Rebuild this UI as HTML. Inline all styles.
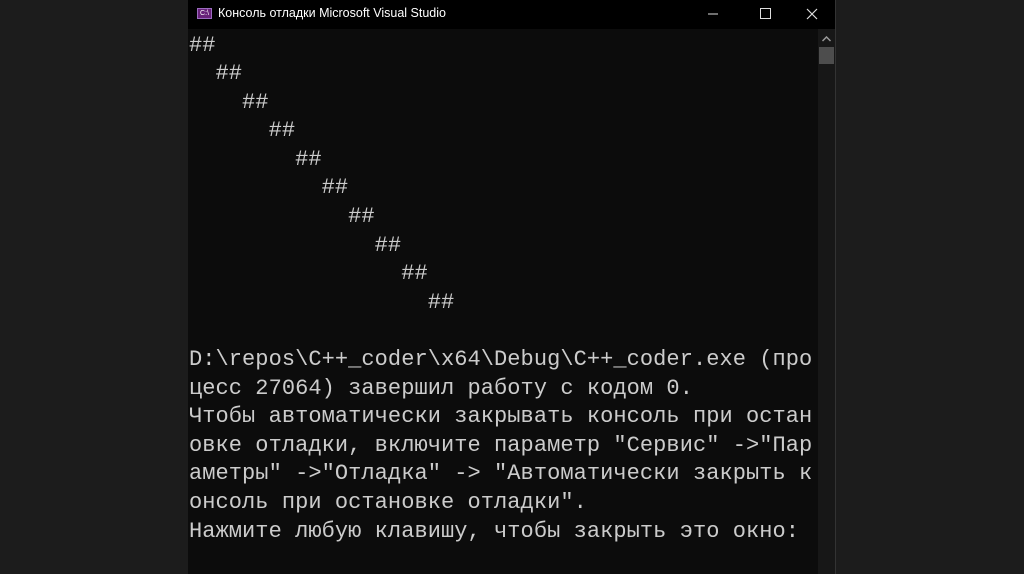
<!DOCTYPE html>
<html><head><meta charset="utf-8"><style>
html,body{margin:0;padding:0;width:1024px;height:574px;overflow:hidden;background:#1c1c1c;}
.win{position:absolute;left:188px;top:0;width:648px;height:574px;background:#0c0c0c;}
.title{position:absolute;left:0;top:0;width:648px;height:29px;background:#000;}
.title .t{position:absolute;left:30px;top:6px;font:12.5px "Liberation Sans","Noto Sans CJK SC",sans-serif;color:#fff;}
.ico{position:absolute;left:9px;top:8px;width:15px;height:11px;background:#68217a;border:1px solid #9b6cc0;box-sizing:border-box;font:7px "Liberation Sans",sans-serif;color:#fff;line-height:9px;text-align:center;}
.con{position:absolute;left:1px;top:31.5px;margin:0;font:22px/28.6px "Liberation Mono","DejaVu Sans Mono",monospace;color:#cccccc;white-space:pre;letter-spacing:0.06px;}
.sb{position:absolute;left:630px;top:29px;width:17px;height:545px;background:#171717;}
.thumb{position:absolute;left:1px;top:18px;width:15px;height:17px;background:#4d4d4d;}
.edge{position:absolute;left:647px;top:0;width:1px;height:574px;background:#333;}
</style></head><body>
<div class="win">
<div class="title"><div class="ico">C:\</div><div class="t">Консоль отладки Microsoft Visual Studio</div>
<svg style="position:absolute;left:520px;top:6px" width="120" height="16"><line x1="0" y1="8" x2="10" y2="8" stroke="#ddd" stroke-width="1"/><rect x="52.5" y="2.5" width="10" height="10" fill="none" stroke="#ddd"/><path d="M99 3L109 13M109 3L99 13" stroke="#ddd" stroke-width="1.2"/></svg></div>
<pre class="con">##
  ##
    ##
      ##
        ##
          ##
            ##
              ##
                ##
                  ##

D:\repos\C++_coder\x64\Debug\C++_coder.exe (про
цесс 27064) завершил работу с кодом 0.
Чтобы автоматически закрывать консоль при остан
овке отладки, включите параметр "Сервис" -&gt;"Пар
аметры" -&gt;"Отладка" -&gt; "Автоматически закрыть к
онсоль при остановке отладки".
Нажмите любую клавишу, чтобы закрыть это окно:</pre>
<div class="sb"><svg style="position:absolute;left:4px;top:7px" width="9" height="6"><path d="M0.5 5L4.5 1L8.5 5" stroke="#999" fill="none" stroke-width="1.5"/></svg><div class="thumb"></div></div>
<div class="edge"></div>
</div>
</body></html>
